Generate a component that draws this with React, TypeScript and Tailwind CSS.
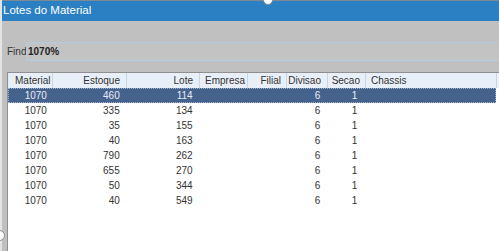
const cols = [
  { key: "material", label: "Material", w: "w-[44px]", head: "justify-start pl-[6px]", cell: "justify-end pr-[5px]" },
  { key: "estoque", label: "Estoque", w: "w-[74px]", head: "justify-end pr-[6px]", cell: "justify-end pr-[6px]" },
  { key: "lote", label: "Lote", w: "w-[73px]", head: "justify-end pr-[6px]", cell: "justify-end pr-[6px]" },
  { key: "empresa", label: "Empresa", w: "w-[48px]", head: "justify-start pl-[5px]", cell: "justify-end pr-[6px]" },
  { key: "filial", label: "Filial", w: "w-[39px]", head: "justify-end pr-[5px]", cell: "justify-end pr-[5px]" },
  { key: "divisao", label: "Divisao", w: "w-[41px]", head: "justify-end pr-[6px]", cell: "justify-end pr-[6px]" },
  { key: "secao", label: "Secao", w: "w-[38px]", head: "justify-end pr-[5px]", cell: "justify-end pr-[7px]" },
  { key: "chassis", label: "Chassis", w: "w-[131px]", head: "justify-start pl-[5px]", cell: "justify-start pl-[5px]" },
];

const rows = [
  ["1070", "460", "114"],
  ["1070", "335", "134"],
  ["1070", "35", "155"],
  ["1070", "40", "163"],
  ["1070", "790", "262"],
  ["1070", "655", "270"],
  ["1070", "50", "344"],
  ["1070", "40", "549"],
];

export default function App() {
  return (
    <div className="relative w-[499px] h-[251px] overflow-hidden bg-[#c0c0c0] flex font-['Liberation_Sans',Arial,sans-serif]">
      {/* window left edge */}
      <div className="w-[2px] shrink-0 bg-[#e4e4e4]" />

      <div className="flex-1 flex flex-col">
        {/* title bar */}
        <div className="h-[21px] shrink-0 bg-[#2b80c3] border-t border-[#7d8a96] flex items-center pl-[1px] text-white text-[11.5px]">
          Lotes do Material
        </div>

        {/* find */}
        <div className="mt-[21px] h-[19px] shrink-0 flex items-center">
          <span className="pl-[5px] w-[24px] text-[10px] text-[#333]">Find</span>
          <div className="flex-1 h-full border-y border-l border-[#b4cbe4] bg-[#c3c3c3] flex items-center pl-[1px] text-[10px] text-[#222] font-bold">
            1070%
          </div>
        </div>

        {/* table */}
        <div className="mt-[11px] ml-[5px] flex-1 flex flex-col border-l border-t border-[#8f8f8f] bg-white">
          <div className="h-[15px] shrink-0 flex bg-[#e9eff8] border-l border-[#dfe8f3] text-[10px] text-[#333]">
            {cols.map((c) => (
              <div key={c.key} className={`${c.w} ${c.head} flex items-center border-r border-[#c8d5e4]`}>
                {c.label}
              </div>
            ))}
            <div className="flex-1 bg-[#eef3f9]" />
          </div>
          <div className="flex flex-col text-[10px]">
            {rows.map((r, i) => {
              const sel = i === 0;
              const vals = [r[0], r[1], r[2], "", "", "6", "1", ""];
              return (
                <div
                  key={i}
                  className={`h-[15px] flex w-[488px] ${sel ? "bg-[#45628c] text-[#e6edf6] border border-dotted border-[#9fb3cf]" : "text-[#333] border border-transparent"}`}
                >
                  {cols.map((c, j) => (
                    <div key={c.key} className={`${c.w} ${c.cell} flex items-center ${j === 0 ? "-ml-px" : ""}`}>
                      {vals[j]}
                    </div>
                  ))}
                </div>
              );
            })}
          </div>
        </div>
      </div>

      {/* resize handles */}
      <div className="absolute left-[263px] top-[-5px] w-[10px] h-[10px] rounded-full bg-white border border-[#8a8a8a]" />
      <div className="absolute left-[-6px] top-[230px] w-[11px] h-[11px] rounded-full bg-white border border-[#8a8a8a]" />
    </div>
  );
}
